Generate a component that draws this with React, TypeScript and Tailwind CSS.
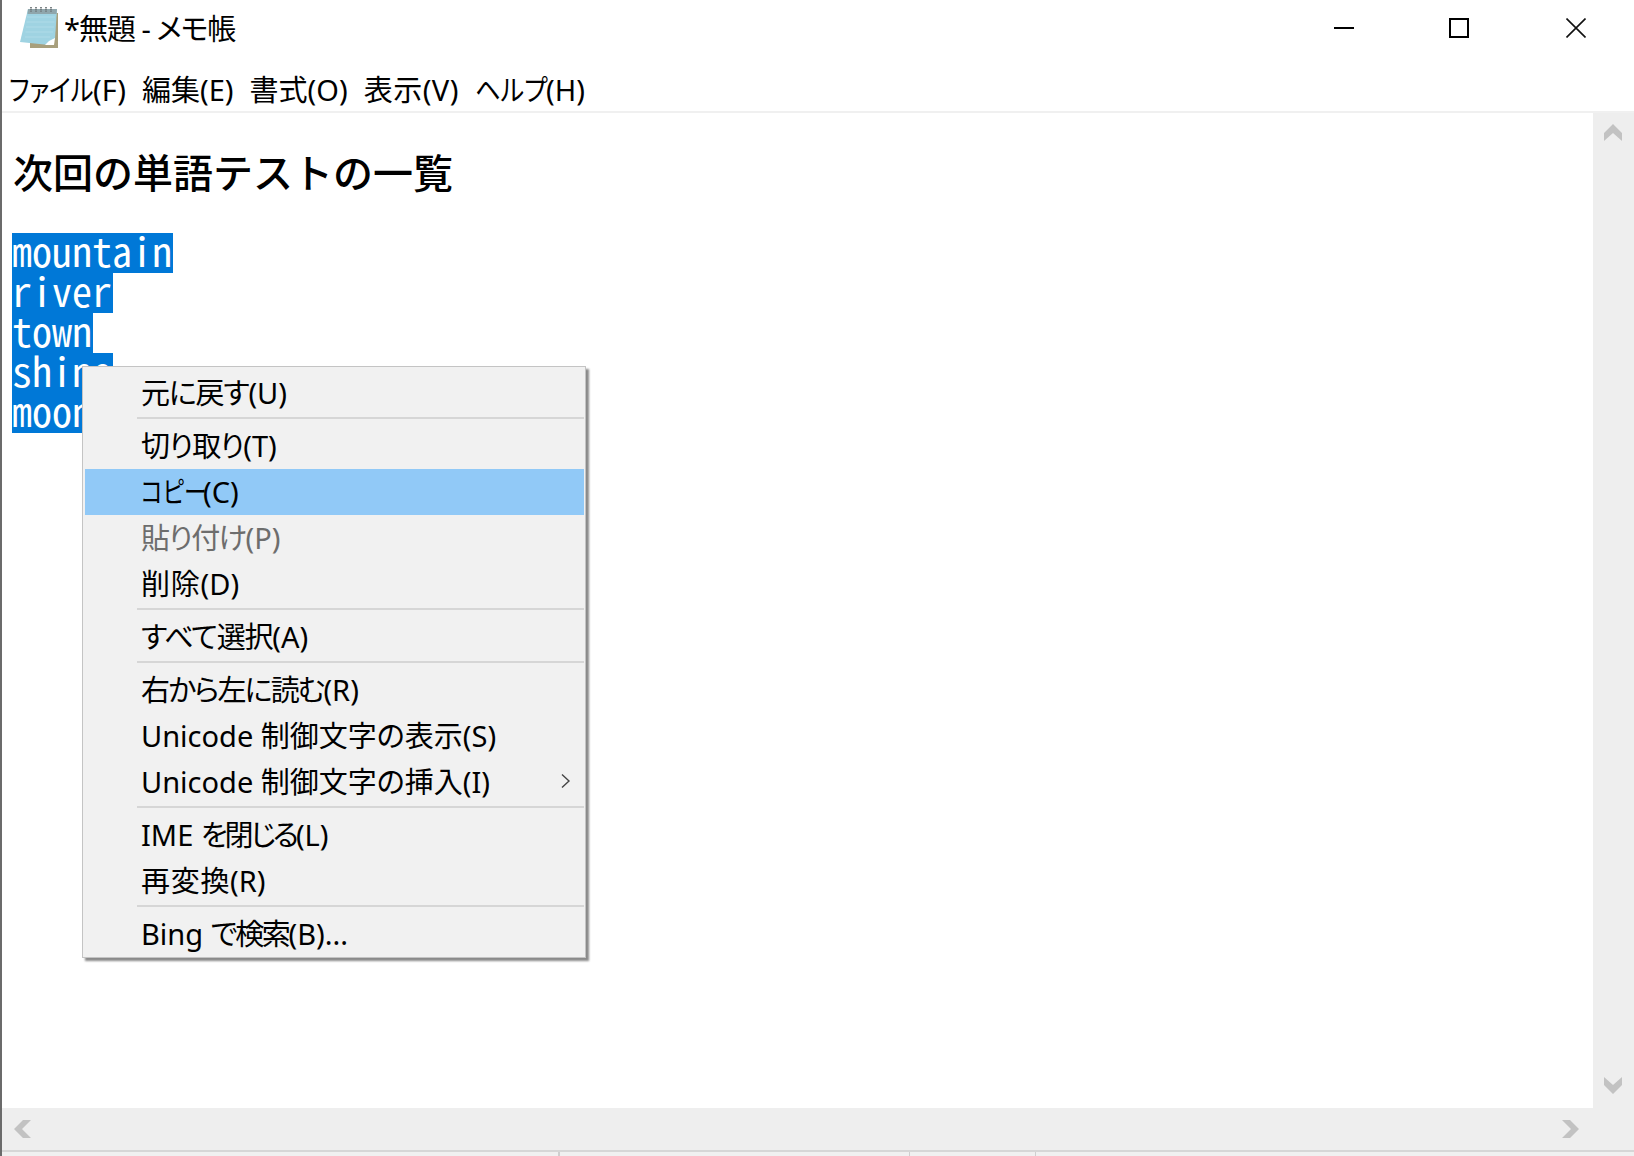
import type { ReactNode } from "react";

const uiFont = "[font-family:'Noto_Sans','Noto_Sans_CJK_JP',sans-serif] [font-feature-settings:'palt']";

type Item = { label: ReactNode; disabled?: boolean; active?: boolean; arrow?: boolean } | "sep";

// kana in the original UI font is narrower than ours, so the kana parts get tightened by hand
const items: Item[] = [
  { label: <><span className="tracking-[-1.2px]">元に戻す</span>(U)</> },
  "sep",
  { label: <><span className="tracking-[-1px]">切り取り</span>(T)</> },
  { label: <><span className="inline-block w-[62px] origin-left scale-x-[0.79]">コピー</span>(C)</>, active: true },
  { label: <><span className="tracking-[-1.5px]">貼り付け</span>(P)</>, disabled: true },
  { label: <><span className="tracking-[0.8px]">削除</span>(D)</> },
  "sep",
  { label: <><span className="tracking-[-1.2px]">すべて選択</span>(A)</> },
  "sep",
  { label: <><span className="tracking-[-1.9px]">右から左に読む</span>(R)</> },
  { label: "Unicode 制御文字の表示(S)" },
  { label: "Unicode 制御文字の挿入(I)", arrow: true },
  "sep",
  { label: <>IME <span className="tracking-[-3px]">を閉じる</span>(L)</> },
  { label: <><span className="tracking-[0.7px]">再変換</span>(R)</> },
  "sep",
  { label: <>Bing <span className="tracking-[-2.3px]">で検索</span>(B)...</> },
];

const words = [
  { text: "mountain", w: "w-[161px]" },
  { text: "river", w: "w-[101px]" },
  { text: "town", w: "w-[81px]" },
  { text: "shine", w: "w-[101px]" },
  { text: "moon", w: "w-[101px]" },
];

function NotepadIcon() {
  return (
    <svg width="42" height="44" viewBox="0 0 42 44" className="mb-[10px] shrink-0">
      <path d="M12 9 L40 9 L40 44 L12 44 Z" fill="#a89f7c" />
      <path d="M10 5 L39 5 L37 35 L31 41 L2 38 Z" fill="#9fd3e2" />
      <path d="M37 34 L36 41 L27 41 L31 37 Z" fill="#ffffff" />
      <path d="M9 13 L37 13 M8.5 18 L36.5 18 M8 23 L36 23 M7.5 28 L35 28 M7 33 L32 33" stroke="#abd9e6" strokeWidth="1.5" />
      <path d="M10 5 L39 5 L38.5 10 L9.5 10 Z" fill="#8fa6ac" />
      <path d="M13 3 V8 M18 3 V8 M23 3 V8 M28 3 V8 M33 3 V8" stroke="#70797c" strokeWidth="1.8" strokeDasharray="1.5 0.6" />
    </svg>
  );
}

function ScrollArrow({ dir }: { dir: "up" | "down" | "left" | "right" }) {
  const paths = {
    up: "M9 0 L18 9 L18 17 L9 9 L0 17 L0 9 Z",
    down: "M0 0 L9 8 L18 0 L18 8 L9 17 L0 8 Z",
    left: "M9 0 L17 0 L8 9 L17 18 L9 18 L0 9 Z",
    right: "M0 0 L8 0 L17 9 L8 18 L0 18 L9 9 Z",
  };
  return (
    <svg width="18" height="18" viewBox="0 0 18 18">
      <path d={paths[dir]} fill="#c2c2c2" />
    </svg>
  );
}

function ContextMenu() {
  return (
    <div className={`absolute left-[80px] top-[366px] w-[504px] h-[592px] bg-[#f1f1f1] border border-[#c4c4c4] py-[3px] pl-[2px] pr-[1px] shadow-[3px_3px_2px_#8a8a8a] ${uiFont}`}>
      {items.map((item, i) =>
        item === "sep" ? (
          <div key={i} className="h-[7px] ml-[52px] pt-[1px]">
            <div className="h-[2px] w-full bg-[#d6d6d6]" />
          </div>
        ) : (
          <div
            key={i}
            className={`h-[46px] pl-[56px] flex items-center justify-between text-[29px] leading-[46px] whitespace-nowrap ${item.active ? "bg-[#91c9f7]" : ""} ${item.disabled ? "text-[#6d6d6d]" : "text-black"}`}
          >
            <span>{item.label}</span>
            {item.arrow && (
              <svg width="12" height="16" viewBox="0 0 12 16" className="mr-[12px] mb-[2px]">
                <path d="M2 1.5 L9 8 L2 14.5" fill="none" stroke="#444" strokeWidth="1.4" />
              </svg>
            )}
          </div>
        )
      )}
    </div>
  );
}

export default function App() {
  return (
    <div className="relative w-[1634px] h-[1156px] bg-white border-l-2 border-[#6b6b6b] flex flex-col overflow-hidden">
      <div className={`h-[62px] flex items-center pl-[16px] text-[29px] text-black ${uiFont}`}>
        <NotepadIcon />
        <span className="ml-[4px] mb-[4px] whitespace-nowrap tracking-[-1px]">*無題 - メモ帳</span>
        <div className="ml-auto flex items-center h-full pb-[6px]">
          <div className="w-[20px] h-[2px] bg-black mr-[95px]" />
          <div className="w-[20px] h-[20px] border-2 border-black mr-[97px]" />
          <svg width="20" height="20" viewBox="0 0 20 20" className="mr-[48px]">
            <path d="M0.5 0.5 L19.5 19.5 M19.5 0.5 L0.5 19.5" stroke="#111" strokeWidth="1.6" />
          </svg>
        </div>
      </div>

      <div className={`h-[51px] flex items-center pl-[7px] pt-[6px] gap-[16px] border-b-2 border-[#f0f0f0] text-[29px] text-black whitespace-nowrap ${uiFont}`}>
        <span><span className="inline-block w-[84px] origin-left scale-x-[0.84]">ファイル</span>(F)</span>
        <span>編集(E)</span>
        <span>書式(O)</span>
        <span className="tracking-[0.5px]">表示(V)</span>
        <span><span className="inline-block w-[71px] origin-left scale-x-[0.87]">ヘルプ</span>(H)</span>
      </div>

      <div className="flex-1 flex min-h-0">
        <div className="flex-1 pl-[10px] pt-[38px]">
          <div className="h-[40px] ml-[1px] leading-[40px] text-[40px] font-medium text-black whitespace-nowrap [font-family:'Noto_Sans_CJK_JP',sans-serif]">
            次回の単語テストの一覧
          </div>
          <div className="mt-[42px] [font-family:'Noto_Sans_CJK_JP',monospace] [font-feature-settings:'hwid'] text-[40px] text-white">
            {words.map((w) => (
              <div key={w.text} className={`h-[40px] leading-[34px] bg-[#0078d7] whitespace-nowrap ${w.w}`}>
                {w.text}
              </div>
            ))}
          </div>
        </div>
        <div className="w-[41px] bg-[#eeeeee] flex flex-col items-center justify-between pt-[11px] pb-[13px] pr-[2px]">
          <ScrollArrow dir="up" />
          <ScrollArrow dir="down" />
        </div>
      </div>

      <div className="h-[42px] bg-[#eeeeee] flex items-center justify-between pl-[12px] pr-[54px]">
        <ScrollArrow dir="left" />
        <ScrollArrow dir="right" />
      </div>

      <div className="h-[6px] bg-[#f0f0f0] border-t-2 border-[#d6d6d6] flex items-end">
        <div className="h-[4px] w-[2px] bg-[#cfcfcf] ml-[556px]" />
        <div className="h-[4px] w-[1px] bg-[#cfcfcf] ml-[349px]" />
        <div className="h-[4px] w-[1px] bg-[#cfcfcf] ml-[125px]" />
      </div>

      <ContextMenu />
    </div>
  );
}
